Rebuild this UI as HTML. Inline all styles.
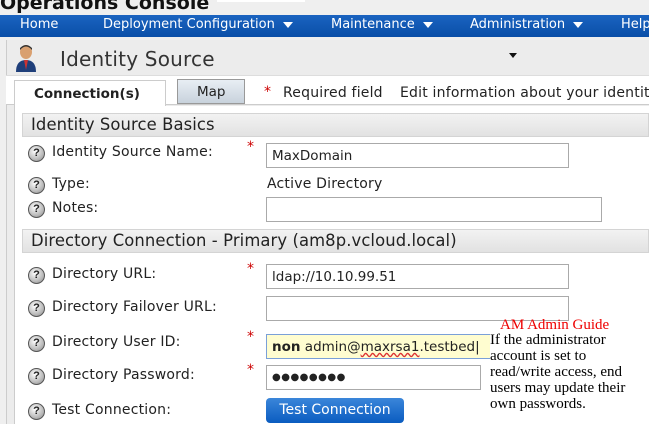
<!DOCTYPE html>
<html><head><style>
*{margin:0;padding:0;box-sizing:border-box}
body{width:649px;height:424px;overflow:hidden;background:#fff;font-family:"DejaVu Sans","Liberation Sans",sans-serif;color:#222;position:relative}
.a{position:absolute;white-space:nowrap}
.nav{left:0;top:15px;width:649px;height:22px;background:linear-gradient(#1a63c0,#0a4fa8);color:#fff;font-size:13px}
.nav span{position:absolute;top:2px}
.tri{display:inline-block;width:0;height:0;border-left:5px solid transparent;border-right:5px solid transparent;border-top:6px solid #fff;margin-left:8px;vertical-align:middle}
.q{width:17px;height:17px;border-radius:50%;background:radial-gradient(circle at 40% 35%,#fff,#bbb 60%,#888);border:1px solid #555;font:bold 11px "Liberation Sans",sans-serif;text-align:center;line-height:15px;color:#222}
.lbl{font-size:14px;letter-spacing:0.2px;color:#222}
.inp{border:1px solid #aaa;background:#fff;height:25px;font-size:13.5px;padding:4px 5px}
.sec{left:22px;width:627px;height:24px;background:linear-gradient(#f2f2f2,#e2e2e2);border:1px solid #d4d4d4;font-size:16.4px;letter-spacing:0.1px;padding:1px 8px}
.req{color:#c00;font-size:14px}
</style></head><body>
<div class="a" style="left:0;top:0;width:649px;height:15px;background:#efefef"></div>
<div class="a" style="left:0;top:-8px;font:bold 19px 'DejaVu Sans',sans-serif;color:#111">Operations Console</div>
<div class="a" style="left:217px;top:0;width:88px;height:2px;background:#fff"></div>
<div class="a nav"><span style="left:20px">Home</span><span style="left:103px">Deployment Configuration<i class="tri"></i></span><span style="left:331px">Maintenance<i class="tri"></i></span><span style="left:470px">Administration<i class="tri"></i></span><span style="left:621px">Help</span></div>
<div class="a" style="left:0;top:37px;width:649px;height:387px;background:#efefef"></div>
<div class="a" style="left:6px;top:40px;width:643px;height:384px;background:#ececec;border-left:1px solid #ccc"></div>
<svg class="a" style="left:15px;top:44px" width="22" height="28" viewBox="0 0 22 28"><ellipse cx="11" cy="8" rx="6" ry="7" fill="#d9a070"/><path d="M5 6 Q11 -1 17 6 L17 4 Q11 -2 5 4Z" fill="#333"/><path d="M1 28 Q1 16 11 16 Q21 16 21 28Z" fill="#1f3f7a"/><path d="M9 16 L11 26 L13 16Z" fill="#c33"/></svg>
<div class="a" style="left:60px;top:47px;font-size:20px;letter-spacing:0.2px;color:#333">Identity Source</div>
<div class="a" style="left:509px;top:53px;border-left:4px solid transparent;border-right:4px solid transparent;border-top:5px solid #111"></div>
<div class="a" style="left:6px;top:75px;width:643px;height:30px;background:#fff;border-top:1px solid #ddd;border-bottom:1px solid #ccc"></div>
<div class="a" style="left:14px;top:80px;width:152px;height:26px;background:#fff;border:1px solid #ccc;border-bottom:none;font:bold 13.5px 'DejaVu Sans',sans-serif;padding:5px 0 0 19px">Connection(s)</div>
<div class="a" style="left:177px;top:79px;width:68px;height:25px;background:linear-gradient(#e8eef4,#c8d2dc);border:1px solid #999;font-size:13.5px;padding:4px 0 0 19px">Map</div>
<div class="a req" style="left:264px;top:84px">*</div>
<div class="a lbl" style="left:283px;top:85px">Required field</div>
<div class="a lbl" style="left:400px;top:85px">Edit information about your identity</div>
<div class="a" style="left:14px;top:106px;width:635px;height:318px;background:#fff;border-left:1px solid #ccc"></div>
<div class="a sec" style="top:113px">Identity Source Basics</div>
<div class="a sec" style="top:229px">Directory Connection - Primary (am8p.vcloud.local)</div>

<div class="a q" style="left:28px;top:145px">?</div><div class="a lbl" style="left:52px;top:144px">Identity Source Name:</div><div class="a req" style="left:247px;top:139px">*</div>
<div class="a inp" style="left:266px;top:143px;width:303px">MaxDomain</div>
<div class="a q" style="left:28px;top:177px">?</div><div class="a lbl" style="left:52px;top:176px">Type:</div>
<div class="a lbl" style="left:267px;top:176px">Active Directory</div>
<div class="a q" style="left:28px;top:201px">?</div><div class="a lbl" style="left:52px;top:200px">Notes:</div>
<div class="a inp" style="left:266px;top:197px;width:336px"></div>

<div class="a q" style="left:28px;top:267px">?</div><div class="a lbl" style="left:52px;top:266px">Directory URL:</div><div class="a req" style="left:247px;top:261px">*</div>
<div class="a inp" style="left:266px;top:264px;width:303px">ldap://10.10.99.51</div>
<div class="a q" style="left:28px;top:300px">?</div><div class="a lbl" style="left:52px;top:299px">Directory Failover URL:</div>
<div class="a inp" style="left:266px;top:296px;width:303px"></div>
<div class="a q" style="left:28px;top:335px">?</div><div class="a lbl" style="left:52px;top:334px">Directory User ID:</div><div class="a req" style="left:247px;top:329px">*</div>
<div class="a inp" style="left:266px;top:334px;width:282px;background:#fffdd0;border-color:#7aa0d8"><b>non</b> admin@<span style="text-decoration:underline wavy #d33">maxrsa1</span>.testbed|</div>
<div class="a q" style="left:28px;top:368px">?</div><div class="a lbl" style="left:52px;top:367px">Directory Password:</div><div class="a req" style="left:247px;top:362px">*</div>
<div class="a inp" style="left:266px;top:365px;width:215px;font-size:10px;padding-top:6px;letter-spacing:0.5px">●●●●●●●●</div>
<div class="a q" style="left:28px;top:403px">?</div><div class="a lbl" style="left:52px;top:402px">Test Connection:</div>
<div class="a" style="left:266px;top:398px;width:138px;height:25px;border-radius:4px;background:linear-gradient(#3b86da,#0a5cc0);color:#fff;font-size:14px;text-align:center;line-height:25px">Test Connection</div>

<div class="a" style="left:500px;top:317px;color:#e00;font:15px 'Liberation Serif',serif">AM Admin Guide</div>
<div class="a" style="left:490px;top:332px;font:15px/16px 'Liberation Serif',serif;color:#000;white-space:normal;width:160px;background:#fff">If the administrator account is set to read/write access, end users may update their own passwords.</div>
</body></html>
